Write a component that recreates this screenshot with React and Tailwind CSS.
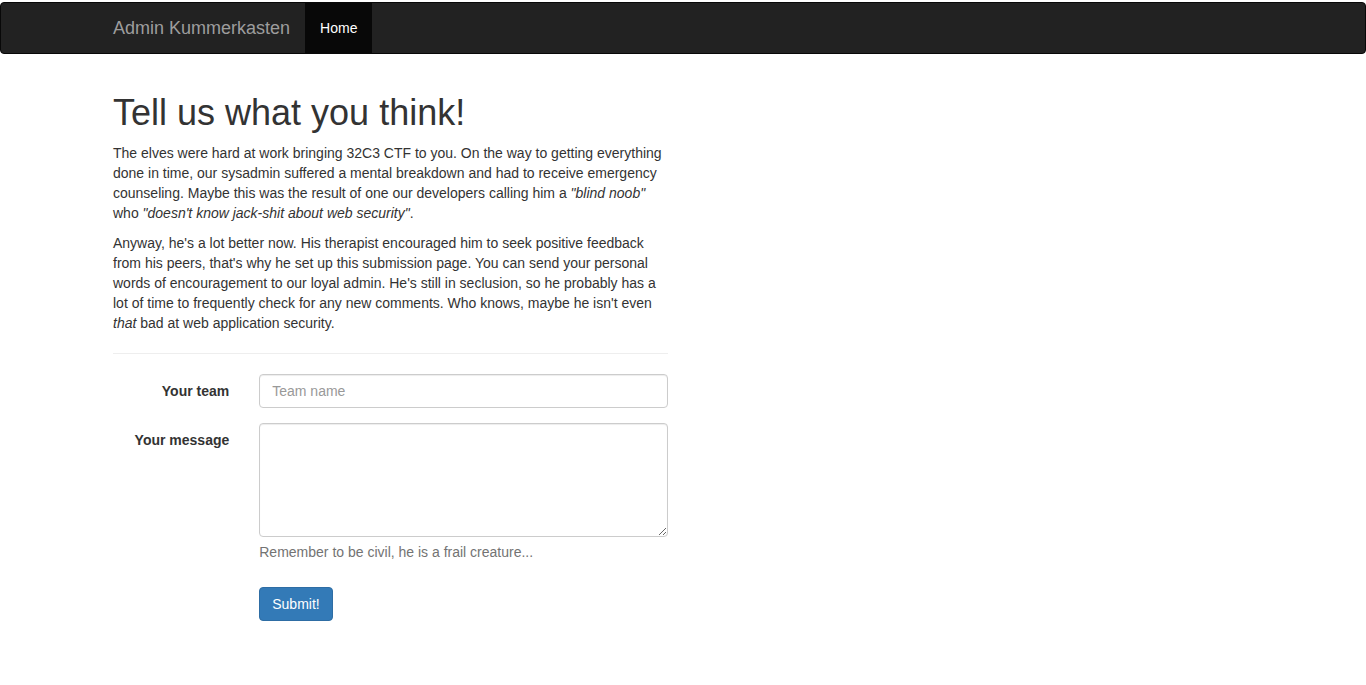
import React from "react";

const App = () => {
  return (
    <div className="min-h-screen bg-white text-[14px] leading-[20px] text-[#333] font-['Liberation_Sans',Arial,sans-serif]">
      {/* NAVBAR */}
      <nav className="mt-[2px] mb-[19px] h-[52px] rounded border border-[#080808] bg-[#222]">
        <div className="mx-auto flex w-[1170px] px-[15px]">
          <a className="-ml-[15px] block h-[50px] px-[15px] py-[15px] text-[18px] leading-[20px] text-[#9d9d9d]">
            Admin Kummerkasten
          </a>
          <ul className="flex">
            <li>
              <a className="block bg-[#080808] px-[15px] py-[15px] leading-[20px] text-white">Home</a>
            </li>
          </ul>
        </div>
      </nav>

      {/* CONTENT */}
      <div className="mx-auto flow-root w-[1170px] px-[15px]">
        <div className="w-[585px] -ml-[15px] px-[15px]">
          <h1 className="mt-5 mb-[10px] text-[36px] leading-[1.1] font-medium">Tell us what you think!</h1>
          <p className="mb-[10px]">
            The elves were hard at work bringing 32C3 CTF to you. On the way to getting everything done in time, our
            sysadmin suffered a mental breakdown and had to receive emergency counseling. Maybe this was the result of
            one our developers calling him a <em>"blind noob"</em> who{" "}
            <em>"doesn't know jack-shit about web security"</em>.
          </p>
          <p className="mb-[10px]">
            Anyway, he's a lot better now. His therapist encouraged him to seek positive feedback from his peers,
            that's why he set up this submission page. You can send your personal words of encouragement to our loyal
            admin. He's still in seclusion, so he probably has a lot of time to frequently check for any new comments.
            Who knows, maybe he isn't even <em>that</em> bad at web application security.
          </p>
          <hr className="mt-5 mb-5 border-0 border-t border-[#eee]" />

          {/* FORM */}
          <form className="-mx-[15px]">
            <div className="mb-[15px] flex">
              <label className="w-1/4 px-[15px] pt-[7px] text-right font-bold">Your team</label>
              <div className="w-3/4 px-[15px]">
                <input
                  type="text"
                  placeholder="Team name"
                  className="block h-[34px] w-full rounded border border-[#ccc] px-3 py-[6px] shadow-[inset_0_1px_1px_rgba(0,0,0,0.075)] placeholder:text-[#999] outline-none"
                />
              </div>
            </div>
            <div className="mb-[15px] flex">
              <label className="w-1/4 px-[15px] pt-[7px] text-right font-bold">Your message</label>
              <div className="w-3/4 px-[15px]">
                <textarea
                  rows={5}
                  className="block h-[114px] w-full rounded border border-[#ccc] px-3 py-[6px] shadow-[inset_0_1px_1px_rgba(0,0,0,0.075)] outline-none"
                />
                <span className="mt-[5px] mb-[10px] block text-[#737373]">Remember to be civil, he is a frail creature...</span>
              </div>
            </div>
            <div className="mb-[15px] flex">
              <div className="ml-[25%] px-[15px]">
                <button
                  type="button"
                  className="rounded border border-[#2e6da4] bg-[#337ab7] px-3 py-[6px] leading-[20px] text-white"
                >
                  Submit!
                </button>
              </div>
            </div>
          </form>
        </div>
      </div>
    </div>
  );
};

export default App;
